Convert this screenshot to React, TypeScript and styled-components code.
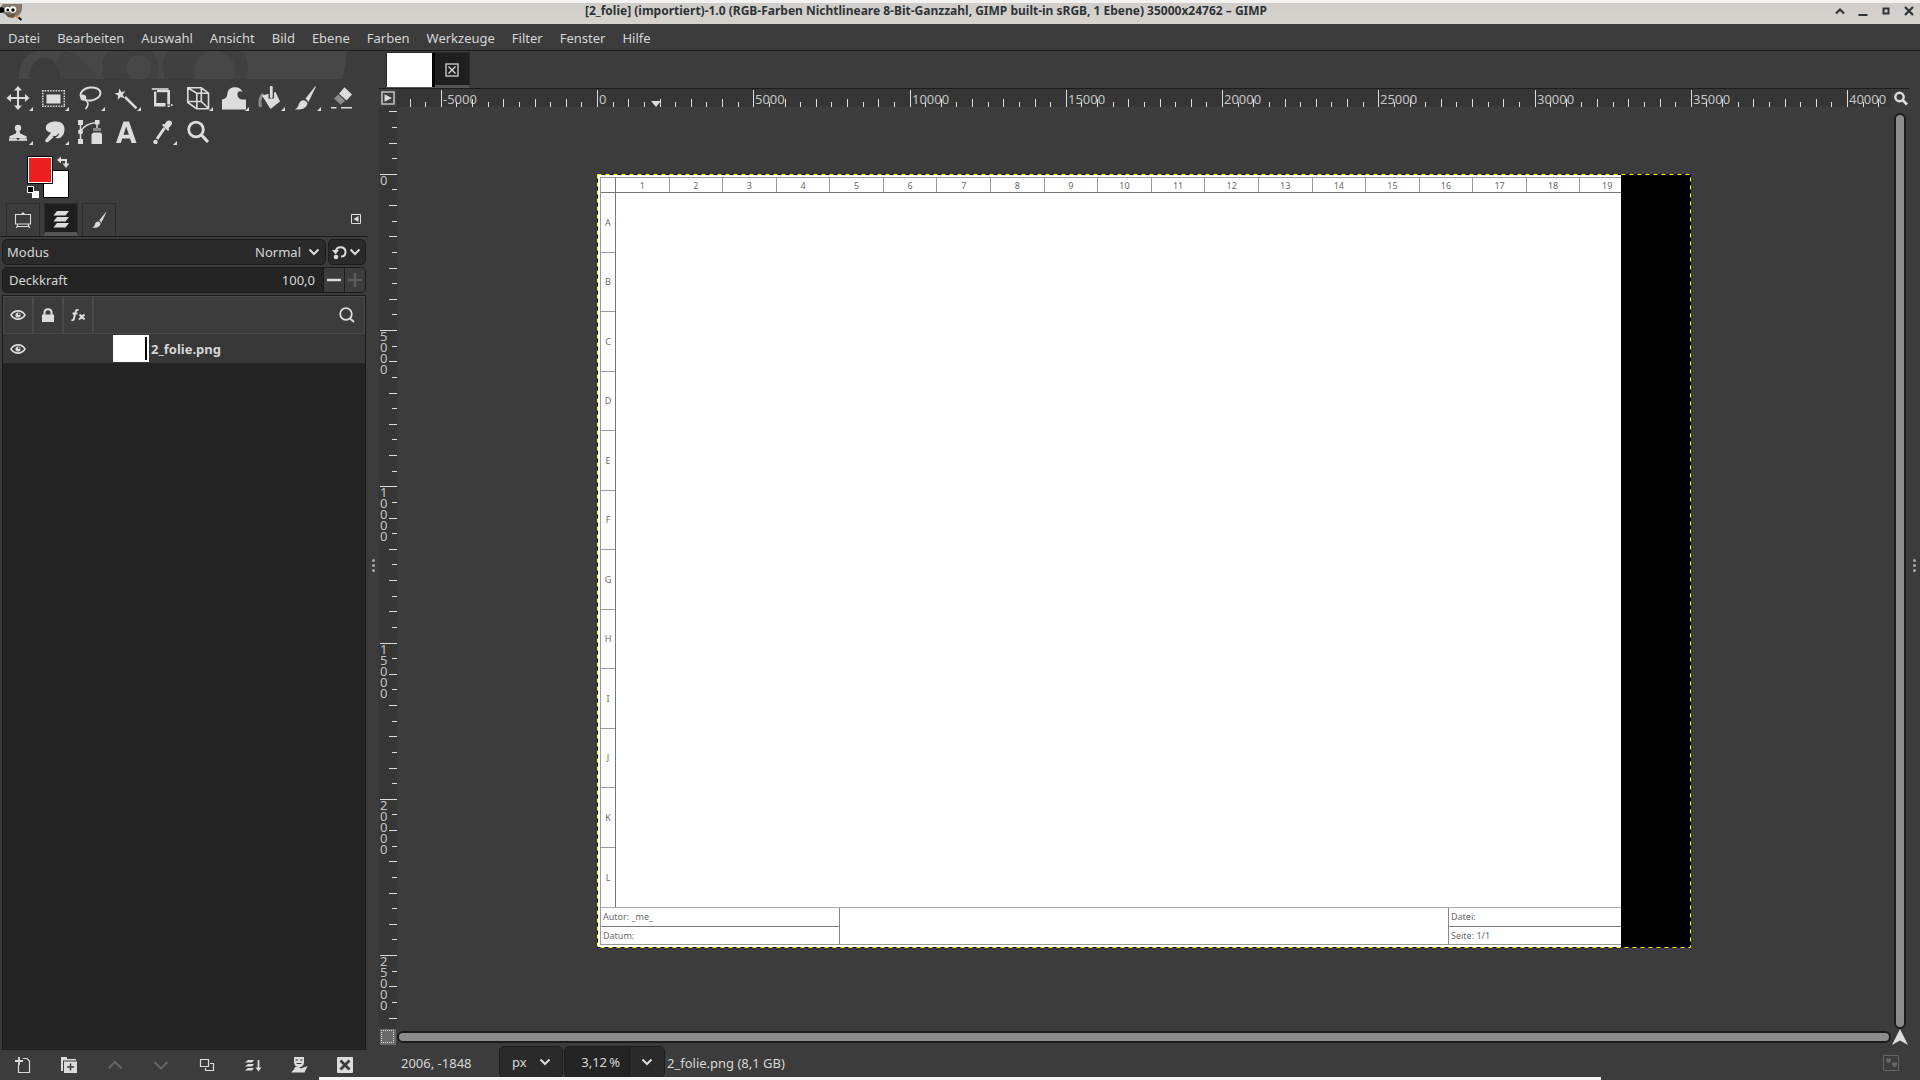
import React from "react";
import styled, { createGlobalStyle } from "styled-components";

const c = {
  bg: "#3c3c3c",
  dark: "#242424",
  field: "#2a2a2a",
  line: "#1c1c1c",
  ruler: "#363636",
  text: "#d6d6d6",
  icon: "#dcdcdc",
  dim: "#666666",
  thumb: "#8c8c8c",
};

const Global = createGlobalStyle`
  * { box-sizing: border-box; }
  html, body, #root { height: 100%; }
  body {
    margin: 0;
    overflow: hidden;
    background: ${c.bg};
    color: ${c.text};
    font: 13px/18px "Noto Sans", "Open Sans", sans-serif;
  }
  button, input, select { font: inherit; color: inherit; }
  svg { display: block; }
`;

const Window = styled.div`
  height: 100vh;
  display: grid;
  grid-template-rows: 24px 27px minmax(0, 1fr);
  position: relative;
`;

const TitleBar = styled.header`
  display: grid;
  grid-template-columns: 28px 1fr 96px;
  align-items: center;
  border-top: 3px solid #f4f3f2;
  background: linear-gradient(#d0ccc9, #d6d3cf);
  color: #2e3436;
  overflow: hidden;
`;

const Title = styled.h1`
  margin: 0;
  font-size: 12px;
  line-height: 15px;
  padding-bottom: 6px;
  text-align: center;
  font-weight: 700;
  white-space: nowrap;
`;

const WindowButtons = styled.div`
  display: flex;
  justify-content: flex-end;
  padding: 0 4px 6px 0;
  gap: 9px;
`;

const PlainButton = styled.button`
  display: flex;
  align-items: center;
  justify-content: center;
  padding: 0;
  border: 0;
  background: none;
`;

const WindowButton = styled(PlainButton)`
  width: 14px;
  height: 14px;
`;

const MenuBar = styled.nav`
  display: flex;
  align-items: center;
  gap: 1px;
  border-bottom: 1px solid ${c.line};
`;

const MenuLink = styled.a`
  padding: 5px 8px 3px;
  color: ${c.text};
  text-decoration: none;
`;

const Body = styled.div`
  display: grid;
  grid-template-columns: 368px 11px minmax(0, 1fr) 11px;
  min-height: 0;
`;

const Dock = styled.aside`
  display: flex;
  flex-direction: column;
  min-height: 0;
`;

const Wilber = styled.svg`
  height: 28px;
  width: 368px;
  flex: none;
`;

const Toolbox = styled.div`
  display: grid;
  grid-template-columns: repeat(10, 36px);
  grid-auto-rows: 34px;
  padding-top: 2px;
`;

const ToolButton = styled(PlainButton)<{ $group?: boolean }>`
  position: relative;
  &::after {
    content: "";
    display: ${(p) => (p.$group ? "block" : "none")};
    position: absolute;
    right: 3px;
    bottom: 4px;
    border-style: solid;
    border-width: 0 0 4px 4px;
    border-color: transparent transparent ${c.icon} transparent;
  }
`;

const ColorRow = styled.div`
  height: 54px;
  padding: 7px 0 0 27px;
`;

const TabRow = styled.div`
  display: flex;
  align-items: flex-end;
  gap: 4px;
  height: 34px;
  padding: 0 7px 0 6px;
  border-bottom: 1px solid ${c.line};
`;

const DockTab = styled(PlainButton)<{ $active?: boolean }>`
  width: 34px;
  height: 33px;
  border: 1px solid #2c2c2c;
  border-bottom: ${(p) => (p.$active ? "4px solid #555" : "0")};
  background: ${(p) => (p.$active ? "#1e1e1e" : "none")};
  padding-top: ${(p) => (p.$active ? "3px" : "0")};
`;

const DockMenu = styled(PlainButton)`
  margin: 0 0 12px auto;
`;

const Options = styled.div`
  display: grid;
  grid-template-columns: 324px 38px;
  gap: 2px;
  padding: 2px 2px 0;
`;

const Field = styled.div<{ $deep?: boolean; $wide?: boolean }>`
  display: flex;
  align-items: center;
  height: 26px;
  border: 1px solid ${c.line};
  border-radius: 5px;
  background: ${(p) => (p.$deep ? c.dark : c.field)};
  grid-column: ${(p) => (p.$wide ? "1 / -1" : "auto")};
  overflow: hidden;
  svg { flex: none; }
`;

const FieldLabel = styled.label<{ $inset: number }>`
  padding: 0 ${(p) => p.$inset}px;
`;

const Select = styled.select`
  appearance: none;
  flex: 1;
  min-width: 0;
  height: 24px;
  border: 0;
  outline: 0;
  background: none;
  padding: 0 7px 0 0;
  text-align: right;
  text-align-last: right;
`;

const ChevronSlot = styled.span<{ $width: number }>`
  width: ${(p) => p.$width}px;
  pointer-events: none;
`;

const ResetButton = styled(PlainButton)`
  width: 34px;
  gap: 2px;
`;

const NumberInput = styled.input<{ $gap: number }>`
  flex: 1;
  min-width: 0;
  height: 24px;
  border: 0;
  outline: 0;
  background: none;
  text-align: right;
  padding: 0 ${(p) => p.$gap}px 0 0;
`;

const StepButton = styled(PlainButton)`
  width: 21px;
  height: 24px;
  background: ${c.bg};
  border-left: 1px solid ${c.line};
`;

const LayerPanel = styled.section`
  display: flex;
  flex-direction: column;
  flex: 1;
  min-height: 0;
  margin: 2px 2px 0;
  border: 1px solid ${c.line};
  background: ${c.dark};
`;

const LayerHead = styled.div`
  display: grid;
  grid-template-columns: 30px 30px 30px 1fr;
  height: 38px;
  flex: none;
  border: 1px solid #4a4a4a;
  background: ${c.bg};
`;

const HeadCell = styled(PlainButton)`
  border-right: 2px solid #4a4a4a;
`;

const HeadSearch = styled(PlainButton)`
  justify-self: end;
  width: 35px;
`;

const LayerRow = styled.div`
  display: flex;
  align-items: center;
  height: 29px;
  background: #373737;
  font-weight: 700;
`;

const EyeButton = styled(PlainButton)`
  width: 30px;
  margin-right: 80px;
`;

const Thumb = styled.span`
  width: 36px;
  height: 27px;
  padding: 2px 2px 2px 32px;
  background: #fff;
  margin-right: 2px;
  &::after {
    content: "";
    display: block;
    width: 2px;
    height: 23px;
    background: #000;
  }
`;

const LayerButtons = styled.div`
  display: grid;
  grid-template-columns: repeat(8, 46px);
  height: 30px;
  flex: none;
`;

const Grip = styled.div`
  display: flex;
  flex-direction: column;
  align-items: center;
  justify-content: center;
  gap: 2px;
  i {
    width: 3px;
    height: 3px;
    border-radius: 50%;
    background: #a8a8a8;
  }
`;

const ImageArea = styled.main`
  display: grid;
  grid-template-rows: 38px minmax(0, 1fr) 34px;
  min-width: 0;
  min-height: 0;
`;

const ImageTabs = styled.div`
  display: flex;
  align-items: flex-start;
  padding: 1px 0 0 7px;
  border-bottom: 1px solid ${c.line};
`;

const ImageTab = styled.div`
  display: flex;
  width: 84px;
  height: 36px;
  border: 1px solid #2a2a2a;
  border-bottom: 3px solid #555;
  background: #1e1e1e;
`;

const TabPreview = styled.div`
  width: 48px;
  height: 34px;
  flex: none;
  background: #fff;
  border-right: 3px solid #000;
`;

const TabClose = styled(PlainButton)`
  width: 34px;
  height: 34px;
`;

const Workspace = styled.div`
  display: grid;
  grid-template-columns: 18px minmax(0, 1fr) 18px;
  grid-template-rows: 18px minmax(0, 1fr) 18px;
`;

const RulerBox = styled.div`
  position: relative;
  overflow: hidden;
  background: ${c.ruler};
`;

const TickH = styled.span<{ $len: number }>`
  position: absolute;
  bottom: 0;
  width: 1px;
  height: ${(p) => p.$len}px;
  background: ${c.icon};
`;

const TickV = styled.span<{ $len: number }>`
  position: absolute;
  right: 0;
  height: 1px;
  width: ${(p) => p.$len}px;
  background: ${c.icon};
`;

const LabelH = styled.span`
  position: absolute;
  top: 1px;
  margin-left: 2px;
  color: #c4c4c4;
`;

const LabelV = styled.span`
  position: absolute;
  left: 1px;
  width: 8px;
  line-height: 11px;
  color: #c4c4c4;
  word-break: break-all;
`;

const Pointer = styled.span`
  position: absolute;
  bottom: 0;
  border-style: solid;
  border-width: 6px 5px 0;
  border-color: ${c.icon} transparent transparent;
`;

const Viewport = styled.div`
  position: relative;
  overflow: hidden;
`;

const Canvas = styled.div`
  position: absolute;
  left: 200px;
  top: 67px;
  width: 1094px;
  height: 774px;
  background: #000;
`;

const Ants = styled.svg`
  position: absolute;
  inset: 0;
  width: 100%;
  height: 100%;
`;

const Sheet = styled.div`
  width: 1024px;
  height: 774px;
  padding: 3px 0 3px 3px;
  background: #fff;
  color: #6a6a6a;
  font-size: 9px;
  line-height: 12px;
  overflow: hidden;
`;

const SheetFrame = styled.div`
  display: grid;
  grid-template-columns: 15px minmax(0, 1fr);
  grid-template-rows: 15px minmax(0, 1fr) 37px;
  height: 768px;
  border: 1px solid #999;
  border-right: 0;
`;

const SheetCorner = styled.div`
  border-right: 1px solid #777;
  border-bottom: 1px solid #777;
`;

const ColumnMarks = styled.div`
  display: grid;
  grid-template-columns: repeat(19, 1fr);
  width: 1018px;
  border-bottom: 1px solid #777;
`;

const Mark = styled.span<{ $row?: boolean }>`
  display: flex;
  align-items: center;
  justify-content: center;
  padding-top: 1px;
  border: 0 solid #999;
  border-width: ${(p) => (p.$row ? "0 0 1px 0" : "0 1px 0 0")};
  &:last-child { border: 0; }
`;

const RowMarks = styled.div`
  display: grid;
  grid-template-rows: repeat(12, 1fr);
  border-right: 1px solid #777;
`;

const SheetFooter = styled.div`
  display: grid;
  grid-column: 1 / -1;
  grid-template-columns: 239px 1fr 173px;
  border-top: 1px solid #aaa;
`;

const FooterColumn = styled.div<{ $side: "left" | "right" }>`
  display: grid;
  grid-template-rows: 1fr 1fr;
  border: 0 solid #888;
  border-width: ${(p) => (p.$side === "left" ? "0 1px 0 0" : "0 0 0 1px")};
  span {
    display: flex;
    align-items: center;
    padding-left: 2px;
  }
  span + span { border-top: 1px solid #777; }
`;

const ScrollV = styled.div`
  width: 12px;
  margin: 6px 3px 0;
  height: calc(100% - 5px);
  border: 2px solid ${c.line};
  border-radius: 6px;
  background: ${c.thumb};
`;

const ScrollH = styled.div`
  height: 12px;
  margin: 3px 0 0;
  border: 2px solid ${c.line};
  border-radius: 6px;
  background: ${c.thumb};
`;

const MaskButton = styled(PlainButton)`
  width: 16px;
  height: 16px;
  margin: 1px 0 0 1px;
  background: #6a6a6a;
`;

const StatusBar = styled.footer`
  display: flex;
  align-items: flex-start;
  padding: 0 10px 0 22px;
`;

const Coordinates = styled.output`
  width: 98px;
  line-height: 34px;
`;

const StatusBox = styled(Field)<{ $width: number }>`
  width: ${(p) => p.$width}px;
  height: 32px;
  margin-right: 1px;
`;

const UnitSelect = styled(Select)`
  padding: 0 0 0 12px;
  text-align: left;
  text-align-last: left;
`;

const ZoomMenu = styled(PlainButton)`
  width: 35px;
  height: 32px;
  border-left: 1px solid ${c.line};
  background: ${c.field};
`;

const StatusText = styled.span`
  padding-left: 1px;
  line-height: 34px;
`;

const Paw = styled.div`
  margin: 9px 0 0 auto;
`;

const Shelf = styled.div`
  position: absolute;
  bottom: 0;
  left: 319px;
  right: 319px;
  height: 3px;
  background: #f6f5f4;
`;

type GlyphProps = { size?: number; children: React.ReactNode; w?: number; h?: number };
const Glyph = ({ size = 24, w, h, children }: GlyphProps) => (
  <svg
    width={w ?? size}
    height={h ?? size}
    viewBox={`0 0 ${w ?? size} ${h ?? size}`}
    fill={c.icon}
    stroke="none"
    aria-hidden="true"
  >
    {children}
  </svg>
);

const line = (width = 2, color = c.icon) => ({
  fill: "none",
  stroke: color,
  strokeWidth: width,
});

const Chevron = ({ color = c.icon }: { color?: string }) => (
  <Glyph w={12} h={8}>
    <path d="M1.5 1.5 6 6l4.500-4.500" {...line(2, color)} />
  </Glyph>
);

const brushPath = (
  <>
    <path d="M22.500 0 12.500 12.500l3 3.500L23 .5z" />
    <path d="M10.800 14.300c2 .3 3.300 1.700 3.700 3.300-.8 3.500-4 5.800-8.500 6H1.500c2.500-1 3.500-2.500 4.200-5 .8-2.800 2.700-4.300 5.100-4.300z" />
  </>
);

const tools: { name: string; group?: boolean; art: React.ReactNode }[] = [
  {
    name: "Verschieben",
    group: true,
    art: (
      <>
        <path d="M12 3v18M3 12h18" {...line(2)} />
        <path d="M12 0l4 4.500H8zM12 24l4-4.500H8zM0.500 12 5 8v8zM23.500 12 19 8v8z" />
      </>
    ),
  },
  {
    name: "Rechteckige Auswahl",
    group: true,
    art: (
      <>
        <rect x="4.500" y="8.500" width="14" height="9" />
        <path d="M0 4.750h23M0 20.250h23" {...line(1.5)} strokeDasharray="1.500 1.200" />
        <path d="M.75 4v17M22.250 4v17" {...line(1.5)} strokeDasharray="1.500 1.200" />
      </>
    ),
  },
  {
    name: "Freie Auswahl",
    group: true,
    art: (
      <>
        <ellipse cx="12.500" cy="8" rx="10" ry="6.500" {...line(2)} transform="rotate(-8 12.500 8)" />
        <path d="M3 10c1.500-1 4.500-.5 4.500 1.500S4.500 14.500 3.500 13 5 9.500 6.500 12.500c1 2 3.500 3 3.500 5.500 0 2-1 3.500-2.500 5" {...line(1.700)} />
      </>
    ),
  },
  {
    name: "Zauberstab",
    group: true,
    art: (
      <>
        <path d="M5.500 2.500 7.300 6l4-.7L8.700 8.500l1.800 3.800L6.700 11l-3 2.800.3-4.200L0.500 7.500l4-.8z" />
        <path d="M11 11 22.500 22.300" {...line(2.5)} />
      </>
    ),
  },
  {
    name: "Zuschneiden",
    art: (
      <>
        <path d="M1.800 2.200h16.700v1.600H1.800z" />
        <path d="M4 5.500h2.300V17h9.200v3.500H4z" />
        <path d="M7 4h13v14.500h-2.700V6.200H7z" />
        <path d="M17.500 19.500H20v1.500h-2.500zM21 18h1.500v2H21z" />
      </>
    ),
  },
  {
    name: "Transformation",
    group: true,
    art: (
      <>
        <path d="M1.800 1.800h13.500l7.200 5.400v15.500H10.700l-8.900-6.200zM1.800 1.800l9 5.400h11.700M10.800 7.200v15.500M15.300 1.800v13.700H1.800M15.300 15.500l7.200 7" {...line(1.6)} />
      </>
    ),
  },
  {
    name: "Warptransformation",
    group: true,
    art: (
      <path d="M0 23.500V13.500c3-.5 5-1.700 5.300-5.500C5.700 4 8.500 1.300 13 1.300c3.800 0 6.500 1.700 7.500 4.700-1.300-1-3.500-1.300-4.500.3-1.500 2.200 0 6.500 3.500 7.200H24v10z" />
    ),
  },
  {
    name: "Füllen",
    group: true,
    art: (
      <>
        <path d="M2.500 21c-1-5-1.500-10 3-13" {...line(3, "#8c8c8c")} />
        <path d="M4 9.500 17.500 6l4.500 9.500L12.500 23z" />
        <path d="M10.500 0h5.500v12.500h-5.500z" fill={c.bg} />
        <path d="M13.300 1.300v9.500" {...line(2.8)} strokeLinecap="round" />
      </>
    ),
  },
  { name: "Pinsel", group: true, art: <g transform="translate(-1 0)">{brushPath}</g> },
  {
    name: "Radierer",
    art: (
      <>
        <path d="M14.500 1.200 22 8.500l-5.500 6L9 7.800z" />
        <path d="M8.300 8.500 15 14.800l-4.300 4L4 12.500z" fill="#8c8c8c" />
        <path d="M1 21.800h5.500M11 21.800h11" {...line(1.5)} />
      </>
    ),
  },
  {
    name: "Klonen",
    group: true,
    art: (
      <>
        <circle cx="12" cy="8" r="3.200" />
        <path d="M10.800 10h2.400l1 3.500 6.300 2.700v2.300h-17v-2.300l6.300-2.700z" />
        <path d="M3 18.500h18v2.300H3z" />
        <path d="M10 18h4l-2 2.500z" fill={c.bg} />
      </>
    ),
  },
  {
    name: "Verschmieren",
    group: true,
    art: (
      <>
        <path d="M4 6.500C5 3 9 1.500 14 1.500c5.500 0 8.500 3 8.500 7.500 0 6-3 9.500-8 9.300l-2-2L6 22c-1.500 1-3.500-.5-2.700-2l6-7.500C6 12.500 3 10 4 6.500z" />
        <path d="M11 16c2 1.300 5 .5 5.500-2.500" {...line(1.300, c.bg)} />
      </>
    ),
  },
  {
    name: "Pfade",
    art: (
      <>
        <path d="M2.500 2v20M3 11C6 5 12 3 19 2.500v6" {...line(1.5)} />
        <path d="M0 0h5v5H0zM0 19h5v5H0zM17 0h4.500v4.500H17z" />
        <circle cx="2.500" cy="11.800" r="2.500" />
        <path d="M15 8h8v3h-8z" fill="#8c8c8c" />
        <path d="M13.500 24V14.500l2-2h7l2 2V24z" />
      </>
    ),
  },
  {
    name: "Text",
    art: <path d="M9.500 1.500h5.500L22.500 23h-5l-1.500-4.500H8.300L6.800 23H2zM12.200 6.500 9.500 14.800h5.400z" fillRule="evenodd" />,
  },
  {
    name: "Farbpipette",
    group: true,
    art: (
      <>
        <path d="M16.500 1.500c2-2 6-1.200 5.500 2-.2 1.500-2.500 3.500-3.500 4.800l1 1.200-1.500 1.500-6-6 1.500-1.300 1 .8z" />
        <path d="M14.500 8 7 19" {...line(3)} />
        <circle cx="5.500" cy="22" r="2.200" />
      </>
    ),
  },
  {
    name: "Vergrößerung",
    art: (
      <>
        <circle cx="10" cy="9.500" r="7.300" {...line(2.8)} />
        <path d="M15 14.500 22 22" {...line(3.2)} />
      </>
    ),
  },
];

const Eye = () => (
  <Glyph w={16} h={12}>
    <path d="M1 6c3.500-5.500 10.500-5.500 14 0-3.500 5.500-10.500 5.500-14 0z" {...line(1.6)} />
    <circle cx="8" cy="6" r="2.600" />
    <circle cx="8.800" cy="5.200" r=".9" fill={c.bg} />
  </Glyph>
);

const layerActions: { name: string; off?: boolean; art: React.ReactNode }[] = [
  {
    name: "Neue Ebene",
    art: (
      <>
        <path d="M9 2.500h4l2.500 2.500v11.500h-11V8.500" {...line(1.2)} />
        <path d="M5 1v8M1 5h8" {...line(1.8)} />
      </>
    ),
  },
  {
    name: "Neue Gruppe",
    art: (
      <>
        <path d="M1 1h6v2h9v1.500H3V15H1z" />
        <path d="M4 5.500h13V17H4z" />
        <path d="M10.500 7.500v7M7 11h7" {...line(1.5, c.bg)} />
      </>
    ),
  },
  { name: "Ebene anheben", off: true, art: <path d="M2.500 12.500 9 6l6.500 6.500" {...line(2, c.dim)} /> },
  { name: "Ebene absenken", off: true, art: <path d="M2.500 6 9 12.500 15.500 6" {...line(2, c.dim)} /> },
  {
    name: "Ebene duplizieren",
    art: <path d="M2.500 3.500h8v7h-8zM12 7.500h3.500v7h-8V12" {...line(1.2)} />,
  },
  {
    name: "Nach unten vereinen",
    art: (
      <>
        <path d="M4 4h6L8 6.500H1zM4 8h6l-2 2.500H1zM4 12h6l-2 2.500H1z" />
        <path d="M14.500 4v9" {...line(1.8)} />
        <path d="M11.500 11.500h6l-3 4z" />
      </>
    ),
  },
  {
    name: "Maske hinzufügen",
    art: (
      <>
        <path d="M4 1h10v5c0 3-2 5-5 5s-5-2-5-5z" />
        <path d="M5.500 4h2.500M10 4h2.500M6.500 7.500h5" {...line(1, c.bg)} />
        <path d="M5 11h4l2 1.500L17.500 10l-3 6.500H1l3-3z" />
      </>
    ),
  },
  {
    name: "Ebene löschen",
    art: (
      <>
        <rect x="1" y="1" width="16" height="16" rx="1" />
        <path d="M4.500 4.500l9 9M13.500 4.500l-9 9" {...line(2.8, c.bg)} />
      </>
    ),
  },
];

const menus = ["Datei", "Bearbeiten", "Auswahl", "Ansicht", "Bild", "Ebene", "Farben", "Werkzeuge", "Filter", "Fenster", "Hilfe"];

const SCALE = 0.03125;

function Ruler({ vertical, origin, from, to }: { vertical?: boolean; origin: number; from: number; to: number }) {
  const values: number[] = [];
  for (let v = from; v <= to; v += 500) values.push(v);
  return (
    <RulerBox>
      {values.map((v) => {
        const at = Math.floor(origin + v * SCALE);
        const len = v % 5000 === 0 ? 17 : v % 1000 === 0 ? 8 : 5;
        const major = v % 5000 === 0;
        return vertical ? (
          <React.Fragment key={v}>
            <TickV $len={len} style={{ top: at }} />
            {major && <LabelV style={{ top: at + 1 }}>{v}</LabelV>}
          </React.Fragment>
        ) : (
          <React.Fragment key={v}>
            <TickH $len={len} style={{ left: at }} />
            {major && <LabelH style={{ left: at }}>{v}</LabelH>}
          </React.Fragment>
        );
      })}
      {!vertical && <Pointer style={{ left: Math.floor(origin + 2006 * SCALE) - 9 }} />}
    </RulerBox>
  );
}

function GripDots() {
  return (
    <Grip>
      <i />
      <i />
      <i />
    </Grip>
  );
}

export default function App() {
  return (
    <>
      <Global />
      <Window>
        <TitleBar>
          <svg width="23" height="20" viewBox="0 0 23 20" aria-hidden="true">
            <path d="M3 0h19c.5 6-.5 10-5 12.500-5 2.500-10 1-12-2.500L0 8V4z" fill="#83786b" />
            <path d="M5 8.500c3 2.500 8 2.500 12 .5l-4 4.500-5-.5z" fill="#5f554a" />
            <circle cx="1.500" cy="6" r="2.700" fill="#000" />
            <circle cx="7.500" cy="5.500" r="2.800" fill="#fff" />
            <circle cx="13" cy="5.500" r="3.300" fill="#fff" />
            <circle cx="7.800" cy="6" r="1.500" fill="#000" />
            <circle cx="13" cy="6" r="1.700" fill="#000" />
            <path d="M15 11.500l3 1.800" stroke="#e08a2a" strokeWidth="2" />
            <path d="M18.500 13.500l3 2.500" stroke="#111" strokeWidth="2.200" />
          </svg>
          <Title>[2_folie] (importiert)-1.0 (RGB-Farben Nichtlineare 8-Bit-Ganzzahl, GIMP built-in sRGB, 1 Ebene) 35000x24762 – GIMP</Title>
          <WindowButtons>
            <WindowButton aria-label="Einrollen">
              <svg width="10" height="10" viewBox="0 0 10 10"><path d="M1 7.500 5 3.500l4 4" {...line(2.2, "#2e3436")} /></svg>
            </WindowButton>
            <WindowButton aria-label="Minimieren">
              <svg width="10" height="10" viewBox="0 0 10 10"><path d="M.5 9h9" {...line(2, "#2e3436")} /></svg>
            </WindowButton>
            <WindowButton aria-label="Maximieren">
              <svg width="10" height="10" viewBox="0 0 10 10"><path d="M2.500 2.500h5v5h-5z" {...line(2, "#2e3436")} /></svg>
            </WindowButton>
            <WindowButton aria-label="Schließen">
              <svg width="10" height="10" viewBox="0 0 10 10"><path d="M1 1l8 8M9 1 1 9" {...line(2.2, "#2e3436")} /></svg>
            </WindowButton>
          </WindowButtons>
        </TitleBar>

        <MenuBar>
          {menus.map((m) => (
            <MenuLink key={m} href="#">{m}</MenuLink>
          ))}
        </MenuBar>

        <Body>
          <Dock>
            <Wilber viewBox="0 0 368 28" fill="#474747" aria-hidden="true">
              <path d="M18.500 28C19 14 25 4 35 0h30c15 4 24 14 31 24l3-24h248c-1 10-2 19-5 28H60.500C60 16 54 7 45 7S29 16 29 28z" />
              <path d="M65 0h35l-4 24.500C89 14 79 4 65 0z" />
              <path d="M60.500 28H97l-1-3.500C89 14 79 4 65 0c-8 6-12 14-4.500 28z" fill="#3e3e3e" opacity=".5" />
              <path d="M109 0h43c6 8 8 18 5 28h-53c-4-10-2-20 5-28z" fill="#404040" />
              <path d="M168 0h74c6 8 7 18 5 28h-82c-4-10-3-20 3-28z" fill="#404040" />
              <circle cx="139" cy="17" r="12.500" />
              <circle cx="214.500" cy="20" r="20.500" />
            </Wilber>

            <Toolbox>
              {tools.map((t) => (
                <ToolButton key={t.name} $group={t.group} aria-label={t.name}>
                  <Glyph>{t.art}</Glyph>
                </ToolButton>
              ))}
            </Toolbox>

            <ColorRow>
              <svg width="44" height="44" viewBox="0 0 44 44" role="img" aria-label="Vordergrund- und Hintergrundfarbe">
                <path d="M16.500 14.500h25v27h-25z" fill="#fff" stroke="#000" />
                <path d="M.5.500h25v27H.5z" fill="#fff" stroke="#000" />
                <path d="M2 2h22v24H2z" fill="#ec2020" />
                <path d="M33 4h6v5" {...line(2)} />
                <path d="M30 4l4-3.500v7zM35.500 7.500h7L39 12z" fill={c.icon} />
                <path d="M5 35h7v7H5z" fill="#fff" />
                <path d="M.5 30.500h6v6h-6z" fill="#000" stroke="#fff" />
              </svg>
            </ColorRow>

            <TabRow>
              <DockTab aria-label="Werkzeugeinstellungen">
                <Glyph size={18}>
                  <path d="M1.500 3.500h15v9.500h-15zM4 13l-1.500 4M14 13l1.500 4M2.500 15.500h13" {...line(1.1)} />
                  <path d="M7 3.500h4L10 1.500H8z" />
                </Glyph>
              </DockTab>
              <DockTab $active aria-label="Ebenen">
                <Glyph w={16} h={18}>
                  <path d="M4 0h12l-3.500 4.500H.5zM4 6h12l-3.500 4.500H.5zM4 12h12l-3.500 4.500H.5z" />
                </Glyph>
              </DockTab>
              <DockTab aria-label="Pinselauswahl">
                <svg width="16" height="16" viewBox="0 0 24 24" fill={c.icon}>{brushPath}</svg>
              </DockTab>
              <DockMenu aria-label="Reitermenü">
                <Glyph size={10}>
                  <path d="M.5.500h9v9h-9z" {...line(1)} />
                  <path d="M7.500 2v6L2.500 5z" />
                </Glyph>
              </DockMenu>
            </TabRow>

            <Options>
              <Field>
                <FieldLabel $inset={4} htmlFor="mode">Modus</FieldLabel>
                <Select id="mode" defaultValue="Normal">
                  <option>Normal</option>
                </Select>
                <ChevronSlot $width={17}><Chevron /></ChevronSlot>
              </Field>
              <Field>
                <ResetButton aria-label="Modusgruppe wechseln">
                  <Glyph w={15} h={16}>
                    <path d="M4 6c1.500-4 9.500-4 9.500 2 0 3-2 4.500-4.500 4.500" {...line(2)} />
                    <path d="M0 6h7L3.500 10.500z" />
                    <circle cx="4" cy="13" r="2.300" />
                  </Glyph>
                  <Chevron />
                </ResetButton>
              </Field>
              <Field $deep $wide>
                <FieldLabel $inset={6} htmlFor="opacity">Deckkraft</FieldLabel>
                <NumberInput $gap={8} id="opacity" defaultValue="100,0" />
                <StepButton aria-label="Verringern">
                  <Glyph size={14}><path d="M0 7h14" {...line(2.500)} /></Glyph>
                </StepButton>
                <StepButton aria-label="Erhöhen" disabled>
                  <Glyph size={14}><path d="M0 7h14M7 0v14" {...line(2.500, "#5c5c5c")} /></Glyph>
                </StepButton>
              </Field>
            </Options>

            <LayerPanel>
              <LayerHead>
                <HeadCell aria-label="Sichtbarkeit"><Eye /></HeadCell>
                <HeadCell aria-label="Sperren">
                  <Glyph w={12} h={14}>
                    <path d="M0 6.500h12V14H0z" />
                    <path d="M2.500 7V4.500c0-4.500 7-4.500 7 0V7" {...line(2)} />
                  </Glyph>
                </HeadCell>
                <HeadCell aria-label="Effekte">
                  <Glyph w={15} h={12}>
                    <path d="M7.500 1C5 .5 4.500 2 4 5L3 9.500C2.700 11 2 11.500.5 11M1.500 4.500h5M8.500 5.500l5 5M13.500 5.500l-5.500 5" {...line(1.9)} />
                  </Glyph>
                </HeadCell>
                <HeadSearch aria-label="Suchen">
                  <Glyph size={16}>
                    <circle cx="7" cy="7" r="5.800" {...line(1.8)} />
                    <path d="M11 11.500 15 15" {...line(1.8)} />
                  </Glyph>
                </HeadSearch>
              </LayerHead>
              <LayerRow>
                <EyeButton aria-label="Ebene sichtbar"><Eye /></EyeButton>
                <Thumb />
                2_folie.png
              </LayerRow>
            </LayerPanel>

            <LayerButtons>
              {layerActions.map((a) => (
                <PlainButton key={a.name} aria-label={a.name} disabled={a.off}>
                  <Glyph size={18}>{a.art}</Glyph>
                </PlainButton>
              ))}
            </LayerButtons>
          </Dock>

          <GripDots />

          <ImageArea>
            <ImageTabs>
              <ImageTab>
                <TabPreview />
                <TabClose aria-label="Bild schließen">
                  <Glyph size={14}>
                    <path d="M1 1h12v12H1z" {...line(1.5, "#bdbdbd")} />
                    <path d="M3.500 3.500l7 7M10.500 3.500l-7 7" {...line(1.300)} />
                  </Glyph>
                </TabClose>
              </ImageTab>
            </ImageTabs>

            <Workspace>
              <PlainButton aria-label="Bildmenü">
                <Glyph size={14}>
                  <path d="M1 1h12v12H1z" {...line(1.6, "#bdbdbd")} />
                  <path d="M3.500 3.300v7.400L11 7z" />
                </Glyph>
              </PlainButton>
              <Ruler origin={200.500} from={-6000} to={41000} />
              <PlainButton aria-label="Fenstergröße folgt Bild">
                <Glyph size={16}>
                  <circle cx="7.500" cy="7" r="4.200" {...line(2.400)} />
                  <path d="M10 9.500 15 14.500" {...line(2.800)} />
                </Glyph>
              </PlainButton>

              <Ruler vertical origin={67.300} from={-2000} to={27000} />
              <Viewport>
                <Canvas>
                  <Sheet>
                    <SheetFrame>
                      <SheetCorner />
                      <ColumnMarks>
                        {Array.from({ length: 19 }, (_, i) => (
                          <Mark key={i}>{i + 1}</Mark>
                        ))}
                      </ColumnMarks>
                      <RowMarks>
                        {"ABCDEFGHIJKL".split("").map((l) => (
                          <Mark key={l} $row>{l}</Mark>
                        ))}
                      </RowMarks>
                      <div />
                      <SheetFooter>
                        <FooterColumn $side="left">
                          <span>Autor: _me_</span>
                          <span>Datum:</span>
                        </FooterColumn>
                        <div />
                        <FooterColumn $side="right">
                          <span>Datei:</span>
                          <span>Seite: 1/1</span>
                        </FooterColumn>
                      </SheetFooter>
                    </SheetFrame>
                  </Sheet>
                  <Ants viewBox="0 0 1094 774" aria-hidden="true">
                    <rect x=".5" y=".5" width="1093" height="773" {...line(1, "#000")} />
                    <rect x=".5" y=".5" width="1093" height="773" {...line(1, "#ffff00")} strokeDasharray="4 4" />
                  </Ants>
                </Canvas>
              </Viewport>
              <ScrollV />

              <MaskButton aria-label="Schnellmaske">
                <Glyph size={16}>
                  <path d="M1 1.500h13M1 13.500h13M1.500 1v13M13.500 1v13" {...line(1)} strokeDasharray="1 1" />
                </Glyph>
              </MaskButton>
              <ScrollH />
              <PlainButton aria-label="Navigation">
                <Glyph size={16}>
                  <path d="M8 0l8 16-8-4.500L0 16z" />
                </Glyph>
              </PlainButton>
            </Workspace>

            <StatusBar>
              <Coordinates>2006, -1848</Coordinates>
              <StatusBox $width={64}>
                <UnitSelect id="unit" aria-label="Einheit" defaultValue="px">
                  <option>px</option>
                </UnitSelect>
                <ChevronSlot $width={23}><Chevron /></ChevronSlot>
              </StatusBox>
              <StatusBox $deep $width={101}>
                <NumberInput $gap={9} aria-label="Vergrößerung" defaultValue={"3,12\u202f%"} />
                <ZoomMenu aria-label="Vergrößerung wählen"><Chevron /></ZoomMenu>
              </StatusBox>
              <StatusText>2_folie.png (8,1 GB)</StatusText>
              <Paw>
                <Glyph size={16}>
                  <path d="M.5.500h15v15H.5z" {...line(1, c.dim)} />
                  <path d="M5.500 8.500 3 6V4l1.500-1 1 1 1-1L8 4v2zM11.500 12.500 9 10V8l1.500-1 1 1 1-1L14 8v2z" fill={c.dim} />
                </Glyph>
              </Paw>
            </StatusBar>
          </ImageArea>

          <GripDots />
        </Body>
        <Shelf />
      </Window>
    </>
  );
}
